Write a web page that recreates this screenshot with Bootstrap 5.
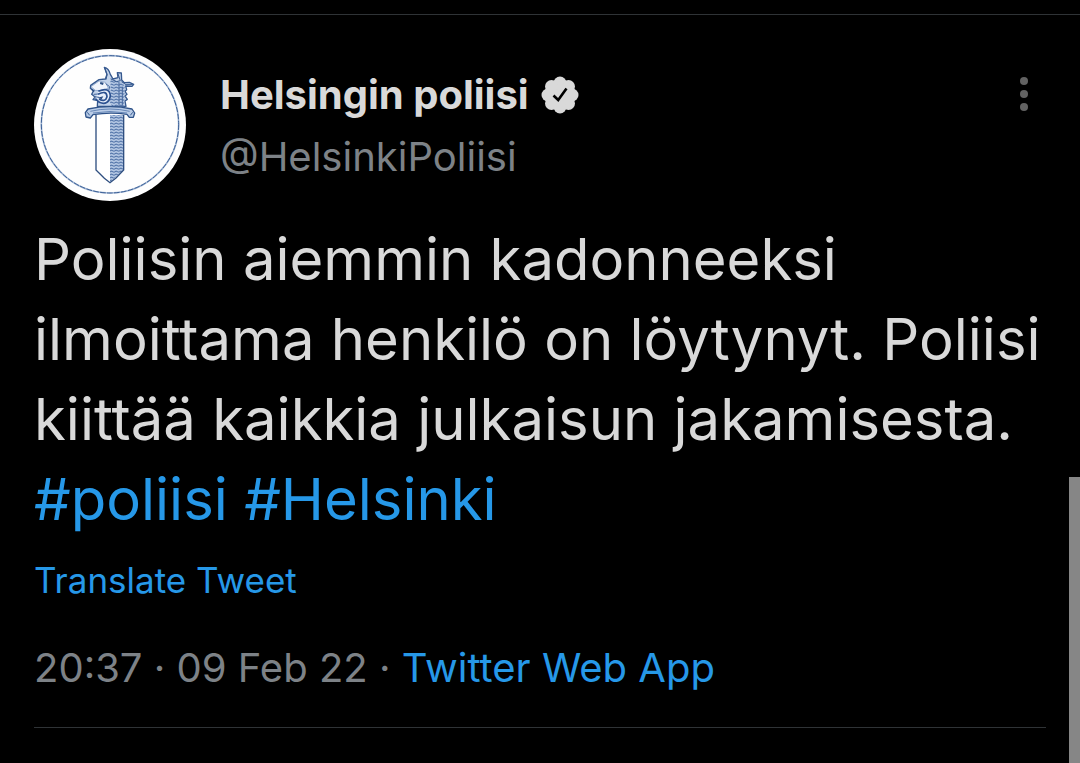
<!DOCTYPE html>
<html lang="fi">
<head>
<meta charset="utf-8">
<meta name="viewport" content="width=device-width, initial-scale=1">
<title>Helsingin poliisi</title>
<link href="https://cdn.jsdelivr.net/npm/bootstrap@5.3.0/dist/css/bootstrap.min.css" rel="stylesheet">
<style>
  body { background: #000; color: #d9d9d9; font-family: Inter, "Liberation Sans", sans-serif; overflow: hidden; }
  .thread { border-top: 1px solid #2f3336; margin-top: 14px; padding: 34px 34px 0; }
  .avatar { width: 152px; height: 152px; }
  .author { padding: 16px 0 0 34px; }
  .author h1 { font-size: 40px; line-height: 60px; font-weight: 700; }
  .name-row { gap: 12px; }
  .verified { width: 38px; height: 38px; }
  .handle, .meta { color: #7d8287; font-size: 40px; }
  .handle { line-height: 64px; }
  .tweet a { color: #2698e8; }
  .more { margin: 22px 12px 0 0; width: 20px; height: 48px; }
  .message { font-size: 58px; line-height: 80px; margin-top: 18px; }
  .translate { font-size: 35px; line-height: 48px; margin-top: 17px; }
  .meta { line-height: 60px; margin-top: 34px; padding-bottom: 29px; border-bottom: 1px solid #2f3336; }
  .scroll-thumb { width: 11px; top: 477px; background: #868686; }
</style>
</head>
<body>
<main class="thread">
  <article class="tweet">
    <header class="d-flex align-items-start">
      <svg class="avatar flex-shrink-0" viewBox="12 15 456 456" role="img" aria-label="Helsingin poliisi">
        <defs>
          <pattern id="hatch" width="14" height="9" patternUnits="userSpaceOnUse">
            <rect width="14" height="9" fill="#b4c7e3"/>
            <path d="M0 7 L6 3 L14 7" fill="none" stroke="#4e70a6" stroke-width="3"/>
          </pattern>
        </defs>
        <circle cx="240" cy="243" r="228" fill="#fefefe"/>
        <circle cx="240" cy="241" r="206" fill="none" stroke="#a9bdd9" stroke-width="5"/>
        <circle cx="240" cy="241" r="206" fill="none" stroke="#3b5f96" stroke-width="3" stroke-dasharray="17 4"/>
        <path d="M198 213 H281 V378 L240 415 L198 378Z" fill="#fff"/>
        <path d="M240 213 H281 V378 L240 415Z" fill="url(#hatch)"/>
        <path d="M198 213 V378 L223 403 L240 416 L258 402 L281 378 V213" fill="none" stroke="#2f4f80" stroke-width="4"/>
        <path d="M202 187 L203 170 L189 167 L195 159 L185 151 L190 141 L181 133 L182 124 L207 107 L226 105 L231 91 L223 70 Q236 72 241 91 L249 105 L264 101 L262 86 L274 87 L275 108 L283 116 L298 115 L311 121 L306 127 L287 126 L290 137 L285 142 L291 151 L285 156 L292 166 L285 171 L288 187Z" fill="#c3d3ea" stroke="#36598f" stroke-width="4" stroke-linejoin="round"/>
        <path d="M241 103 L264 114 L275 113 L284 126 L282 187 H246 L238 171 L242 145Z" fill="url(#hatch)"/>
        <path d="M183 128 L207 111 L226 115 L235 132 L216 140 L196 139Z" fill="#f1f5fc" stroke="#7694c0" stroke-width="2"/>
        <path d="M224 71 L231 93 L228 107 M243 105 L260 113 L271 110 L264 90 M275 113 L288 122 L308 122" fill="none" stroke="#36598f" stroke-width="3"/>
        <path d="M205 142 Q239 127 241 156 Q235 186 208 175 L196 164 M204 151 Q230 137 231 158 Q226 176 207 165" fill="#e9f0fb" stroke="#2c5190" stroke-width="5"/>
        <path d="M211 114 L221 116 L219 123 L210 120Z M183 132 L195 140 L190 145Z M202 161 L220 157 L215 166Z" fill="#2d4f83"/>
        <path d="M191 151 L206 150 M193 158 L208 160 M227 119 L239 128 L236 140 M267 116 V184 M277 128 V185" fill="none" stroke="#46689e" stroke-width="3"/>
        <path d="M174 195 Q240 181 306 195 L314 207 L310 220 L298 220 L291 211 Q240 203 189 212 L181 222 L168 219 L166 206Z" fill="#b9cce7" stroke="#2f5389" stroke-width="4" stroke-linejoin="round"/>
        <path d="M181 202 Q240 188 299 202 M189 207 Q240 198 291 207" fill="none" stroke="#6787b7" stroke-width="3"/>
        <path d="M172 205 L179 214 M308 205 L301 214" fill="none" stroke="#365b91" stroke-width="3"/>
      </svg>
      <div class="author flex-grow-1">
        <div class="name-row d-flex align-items-center">
          <h1 class="m-0">Helsingin poliisi</h1>
          <svg class="verified" viewBox="0 0 38 38" role="img" aria-label="Verified">
            <g fill="#d9d9d9"><circle cx="19" cy="19" r="14"/><circle cx="19" cy="7" r="6.5"/><circle cx="27.5" cy="10.5" r="6.5"/><circle cx="31" cy="19" r="6.5"/><circle cx="27.5" cy="27.5" r="6.5"/><circle cx="19" cy="31" r="6.5"/><circle cx="10.5" cy="27.5" r="6.5"/><circle cx="7" cy="19" r="6.5"/><circle cx="10.5" cy="10.5" r="6.5"/></g>
            <path d="M12.5 19.5 L17.2 24 L25.5 12.5" fill="none" stroke="#000" stroke-width="2.6"/>
          </svg>
        </div>
        <div class="handle">@HelsinkiPoliisi</div>
      </div>
      <button class="more btn p-0 border-0 d-flex justify-content-center" type="button" aria-label="More">
        <svg width="10" height="48" viewBox="0 0 10 48" fill="#626262"><circle cx="5" cy="10" r="4"/><circle cx="5" cy="23" r="4"/><circle cx="5" cy="36" r="4"/></svg>
      </button>
    </header>
    <p class="message mb-0">Poliisin aiemmin kadonneeksi<br>ilmoittama henkilö on löytynyt. Poliisi<br>kiittää kaikkia julkaisun jakamisesta.<br><a class="text-decoration-none" href="#poliisi">#poliisi</a> <a class="text-decoration-none" href="#helsinki">#Helsinki</a></p>
    <div class="translate"><a class="text-decoration-none" href="#translate">Translate Tweet</a></div>
    <div class="meta">20:37 · 09 Feb 22 · <a class="text-decoration-none" href="#source">Twitter Web App</a></div>
  </article>
</main>
<div class="scroll-thumb position-fixed end-0 bottom-0"></div>
<script src="https://cdn.jsdelivr.net/npm/bootstrap@5.3.0/dist/js/bootstrap.bundle.min.js"></script>
</body>
</html>
